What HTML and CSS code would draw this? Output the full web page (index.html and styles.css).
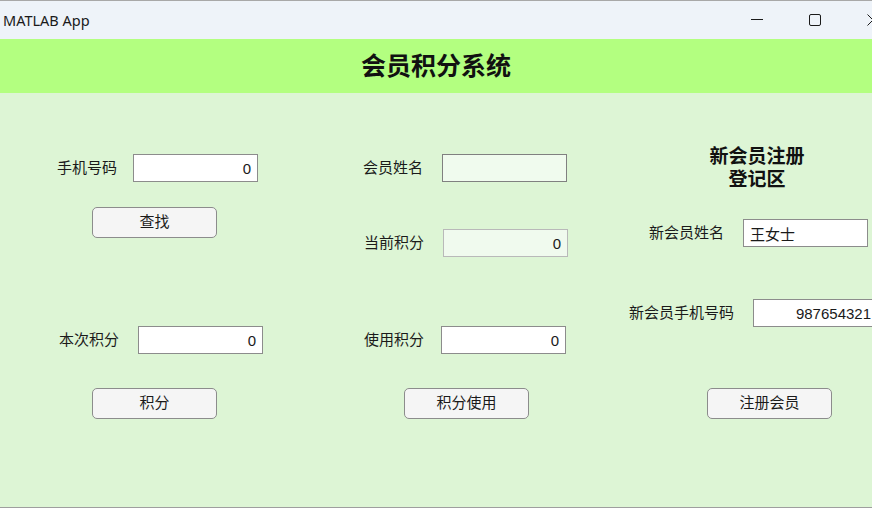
FILE: index.html
```html
<!DOCTYPE html>
<html lang="zh">
<head>
<meta charset="utf-8">
<title>MATLAB App</title>
<link rel="stylesheet" href="styles.css">
</head>
<body>
<div class="window">
  <div class="titlebar">
    <span class="app-title">MATLAB App</span>
    <div class="controls">
      <div class="ctrl"><svg width="12" height="12" viewBox="0 0 12 12"><line x1="0" y1="5.5" x2="12" y2="5.5" stroke="#1a1a1a" stroke-width="1"/></svg></div>
      <div class="ctrl"><svg width="12" height="12" viewBox="0 0 12 12"><rect x="0.5" y="0.5" width="11" height="11" rx="1.5" fill="none" stroke="#1a1a1a" stroke-width="1"/></svg></div>
      <div class="ctrl"><svg width="12" height="12" viewBox="0 0 12 12"><path d="M0.5 0.5 L11.5 11.5 M11.5 0.5 L0.5 11.5" stroke="#1a1a1a" stroke-width="1"/></svg></div>
    </div>
  </div>
  <div class="header"><h1>会员积分系统</h1></div>
  <div class="main">
    <div class="col col1">
      <div class="field f-phone"><span class="label">手机号码</span><div class="input num">0</div></div>
      <button class="btn b-find">查找</button>
      <div class="field f-earn"><span class="label">本次积分</span><div class="input num">0</div></div>
      <button class="btn b-earn">积分</button>
    </div>
    <div class="col col2">
      <div class="field f-name"><span class="label">会员姓名</span><div class="input readonly"></div></div>
      <div class="field f-points"><span class="label">当前积分</span><div class="input num disabled">0</div></div>
      <div class="field f-use"><span class="label">使用积分</span><div class="input num">0</div></div>
      <button class="btn b-use">积分使用</button>
    </div>
    <div class="col col3">
      <div class="reg-title">新会员注册<br>登记区</div>
      <div class="field f-newname"><span class="label">新会员姓名</span><div class="input">王女士</div></div>
      <div class="field f-newphone"><span class="label">新会员手机号码</span><div class="input num">987654321</div></div>
      <button class="btn b-reg">注册会员</button>
    </div>
  </div>
</div>
</body>
</html>
```
FILE: styles.css
```css
html, body {
  margin: 0;
  padding: 0;
  background: #ddf5d5;
}
body {
  font-family: "Liberation Sans", "Noto Sans CJK SC", sans-serif;
  color: #1a1a1a;
}
.window {
  width: 872px;
  height: 508px;
  box-sizing: border-box;
  overflow: hidden;
  display: flex;
  flex-direction: column;
  background: #ddf5d5;
  border-top: 1px solid #a8a8a8;
  border-bottom: 1px solid #9e9e9e;
}
.titlebar {
  flex: none;
  height: 38px;
  background: #eef3f9;
  display: flex;
  align-items: center;
}
.app-title {
  font-family: "Noto Sans", "Open Sans", sans-serif;
  font-size: 14.5px;
  margin-left: 3px;
  color: #1a1a1a;
}
.controls {
  margin-left: auto;
  margin-right: -30px;
  display: flex;
  height: 38px;
}
.ctrl {
  width: 58px;
  height: 38px;
  display: flex;
  align-items: center;
  justify-content: center;
}
.ctrl svg {
  margin-top: -1px;
}
.header {
  flex: none;
  height: 54px;
  background: #b3ff80;
  display: flex;
  align-items: center;
  justify-content: center;
}
.header h1 {
  margin: 0;
  font-size: 25px;
  font-weight: bold;
  line-height: 30px;
  color: #111;
}
.main {
  flex: 1;
  display: flex;
}
.col {
  display: flex;
  flex-direction: column;
  align-items: flex-start;
}
.col1, .col2 {
  width: 300px;
  flex: none;
}
.col3 {
  flex: 1;
}
.field {
  display: flex;
  align-items: center;
  gap: 19px;
}
.label {
  flex: none;
  font-size: 15px;
  line-height: 20px;
  white-space: nowrap;
  color: #1a1a1a;
}
.input {
  flex: none;
  width: 125px;
  height: 28px;
  box-sizing: border-box;
  border: 1px solid #8c8c8c;
  background: #ffffff;
  font-size: 15px;
  display: flex;
  align-items: center;
  padding: 0 6px;
  white-space: nowrap;
  color: #1a1a1a;
}
.input.num {
  justify-content: flex-end;
}
.input.readonly {
  background: #f0fbee;
  border-color: #808080;
}
.input.disabled {
  background: #f0faee;
  border-color: #b9b9b9;
}
.btn {
  flex: none;
  width: 125px;
  height: 31px;
  box-sizing: border-box;
  border: 1px solid #8c8c8c;
  border-radius: 5px;
  background: #f5f5f5;
  font-family: "Liberation Sans", "Noto Sans CJK SC", sans-serif;
  font-size: 15px;
  line-height: 20px;
  color: #1a1a1a;
  padding: 0 0 2px;
}

/* column 1 */
.f-phone { margin: 61px 0 0 57px; gap: 16px; }
.b-find { margin: 25px 0 0 92px; }
.f-earn { margin: 88px 0 0 59px; }
.b-earn { margin: 34px 0 0 92px; }

/* column 2 */
.f-name { margin: 61px 0 0 63px; }
.f-points { margin: 47px 0 0 64px; }
.f-use { margin: 69px 0 0 64px; gap: 17px; }
.b-use { margin: 34px 0 0 104px; }

/* column 3 */
.reg-title {
  margin: 52px 0 0 107px;
  width: 100px;
  text-align: center;
  font-size: 19px;
  font-weight: bold;
  line-height: 23px;
  color: #111;
}
.f-newname { margin: 28px 0 0 49px; }
.f-newphone { margin: 52px 0 0 29px; }
.b-reg { margin: 61px 0 0 107px; }
```
